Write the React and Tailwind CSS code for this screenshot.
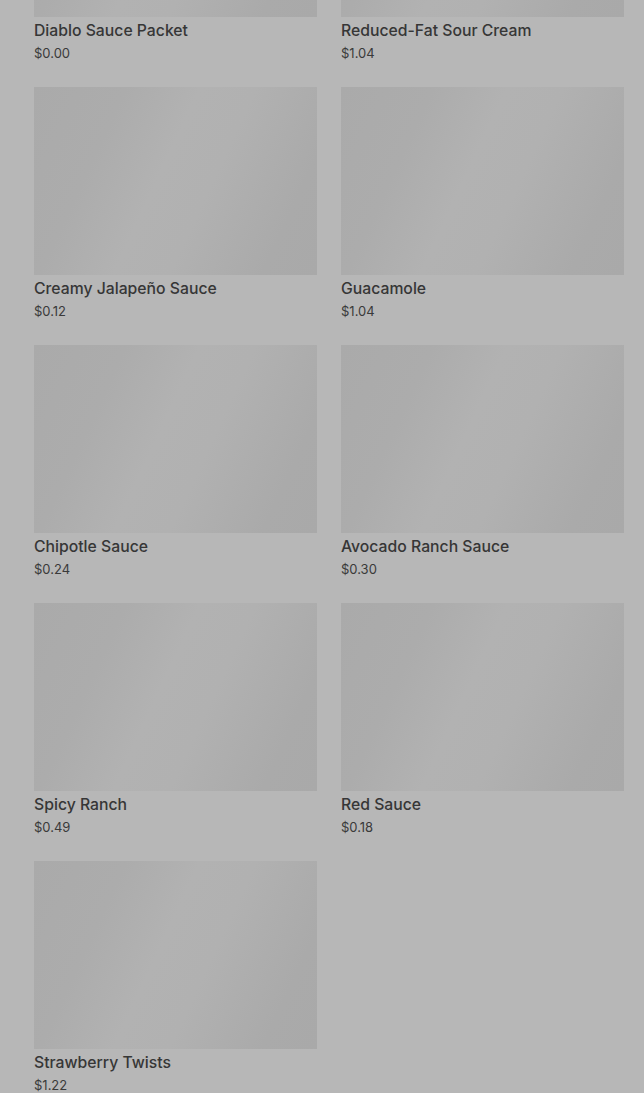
const items = [
  { name: 'Diablo Sauce Packet', price: '$0.00' },
  { name: 'Reduced-Fat Sour Cream', price: '$1.04' },
  { name: 'Creamy Jalapeño Sauce', price: '$0.12' },
  { name: 'Guacamole', price: '$1.04' },
  { name: 'Chipotle Sauce', price: '$0.24' },
  { name: 'Avocado Ranch Sauce', price: '$0.30' },
  { name: 'Spicy Ranch', price: '$0.49' },
  { name: 'Red Sauce', price: '$0.18' },
  { name: 'Strawberry Twists', price: '$1.22' },
];

export default function App() {
  return (
    <div className="h-[1093px] overflow-hidden bg-[#b7b7b7] font-['Inter','Roboto',sans-serif]">
      <div className="mt-[-171px] grid grid-cols-2 gap-x-6 gap-y-[23px] pl-[34px] pr-5">
        {items.map((item) => (
          <div key={item.name}>
            <div className="h-[188px] bg-[linear-gradient(115deg,#aaaaaa_0%,#acacac_25%,#b2b2b2_45%,#b1b1b1_60%,#aaaaaa_85%,#a9a9a9_100%)]" />
            <p className="mt-[2px] text-[15.75px] font-medium leading-6 text-[#363636]">{item.name}</p>
            <p className="text-[13px] leading-[21px] text-[#3a3a3a]">{item.price}</p>
          </div>
        ))}
      </div>
    </div>
  );
}
